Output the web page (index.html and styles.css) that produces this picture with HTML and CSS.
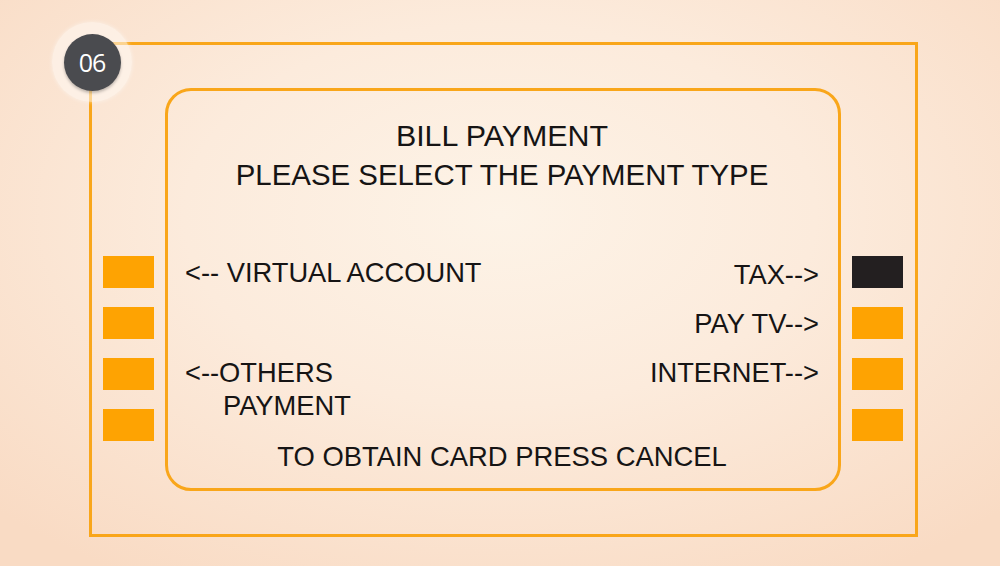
FILE: index.html
```html
<!DOCTYPE html>
<html>
<head>
<meta charset="utf-8">
<link rel="stylesheet" href="styles.css">
</head>
<body>
<div class="stage">
  <div class="frame">
    <div class="badge"><span>06</span></div>
    <div class="keys">
      <div class="key"></div>
      <div class="key"></div>
      <div class="key"></div>
      <div class="key"></div>
    </div>
    <div class="screen">
      <div class="title">
        <div class="title-main">BILL PAYMENT</div>
        <div>PLEASE SELECT THE PAYMENT TYPE</div>
      </div>
      <div class="options">
        <div class="col-left">
          <div class="opt">&lt;-- VIRTUAL ACCOUNT</div>
          <div class="opt"></div>
          <div class="opt-multi">
            <div>&lt;--OTHERS</div>
            <div class="indent">PAYMENT</div>
          </div>
        </div>
        <div class="col-right">
          <div class="opt">TAX--&gt;</div>
          <div class="opt">PAY TV--&gt;</div>
          <div class="opt">INTERNET--&gt;</div>
        </div>
      </div>
      <div class="footer">TO OBTAIN CARD PRESS CANCEL</div>
    </div>
    <div class="keys">
      <div class="key key-active"></div>
      <div class="key"></div>
      <div class="key"></div>
      <div class="key"></div>
    </div>
  </div>
</div>
</body>
</html>
```

FILE: styles.css
```css
html, body {
  margin: 0;
  padding: 0;
}
body {
  width: 1000px;
  height: 566px;
  overflow: hidden;
  font-family: "Liberation Sans", Arial, sans-serif;
  color: #161414;
  background: radial-gradient(ellipse 70% 75% at 50% 38%, #fdf3e7 0%, #fcebdc 45%, #f9dbc4 100%);
}
.stage {
  width: 1000px;
  height: 566px;
  padding: 42px 82px 29px 89px;
  box-sizing: border-box;
}
.frame {
  position: relative;
  width: 829px;
  height: 495px;
  box-sizing: border-box;
  border: 3px solid #f9a61a;
  display: flex;
  padding: 0 12px 0 11px;
  gap: 11px;
}
.badge {
  position: absolute;
  left: -40px;
  top: -23px;
  width: 80px;
  height: 80px;
  border-radius: 50%;
  background: rgba(255, 250, 244, 0.55);
  box-shadow: 0 0 4px rgba(255, 255, 255, 0.5);
  display: flex;
  align-items: center;
  justify-content: center;
}
.badge span {
  width: 57px;
  height: 57px;
  border-radius: 50%;
  background: #4a4b4f;
  color: #ffffff;
  font-family: "Open Sans", "Liberation Sans", sans-serif;
  font-size: 25px;
  display: flex;
  align-items: center;
  justify-content: center;
  box-shadow: 0 2px 3px rgba(0, 0, 0, 0.25);
  letter-spacing: -1px;
}
.keys {
  display: flex;
  flex-direction: column;
  gap: 19px;
  padding-top: 211px;
}
.key {
  width: 51px;
  height: 32px;
  background: #fea302;
}
.key-active {
  background: #231f20;
}
.screen {
  margin-top: 43px;
  height: 403px;
  width: 676px;
  box-sizing: border-box;
  border: 3px solid #f9a61a;
  border-radius: 26px;
  padding: 24px 19px 11px 17px;
  display: flex;
  flex-direction: column;
  font-size: 27.3px;
}
.title {
  text-align: center;
  line-height: 40px;
  font-size: 29.4px;
}
.title-main {
  font-size: 30.4px;
}
.options {
  display: flex;
  justify-content: space-between;
  margin-top: 53px;
}
.col-left .opt {
  line-height: 50px;
  height: 50px;
}
.opt-multi {
  line-height: 33px;
  margin-top: 8px;
}
.indent {
  padding-left: 38px;
}
.col-right {
  padding-top: 2px;
  text-align: right;
}
.col-right .opt {
  line-height: 49px;
}
.footer {
  margin-top: auto;
  line-height: 40px;
  text-align: center;
  font-size: 27.4px;
}
```
